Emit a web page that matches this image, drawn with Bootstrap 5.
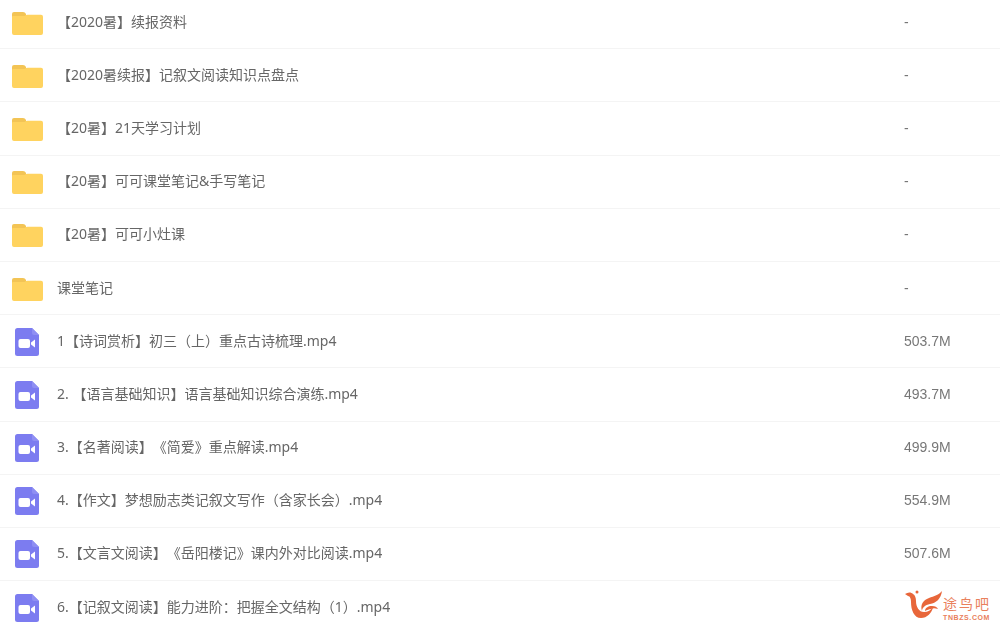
<!DOCTYPE html>
<html lang="zh-CN">

<head>
    <meta charset="UTF-8" />
    <meta name="viewport" content="width=device-width, initial-scale=1" />
    <title>文件列表</title>
    <link href="https://cdn.jsdelivr.net/npm/bootstrap@5.3.3/dist/css/bootstrap.min.css" rel="stylesheet" />
    <style>
        html, body {
            height: 100%;
            overflow: hidden;
        }

        body {
            background: #fff;
            font-family: "Noto Sans", "Noto Sans CJK SC", sans-serif;
            font-size: 14px;
            color: #666;
            text-spacing-trim: space-all;
        }

        .file-list {
            margin-top: -4px;
        }

        .file-row {
            height: 53.2px;
            padding: 0 0 0 12px;
            border-color: #f4f4f4;
            color: #666;
            background: transparent;
        }

        .file-icon {
            width: 31px;
            flex: none;
            margin-right: 14px;
        }

        .file-name {
            flex: 1;
            padding-bottom: 2px;
            filter: blur(.3px);
        }

        .file-size {
            width: 96px;
            flex: none;
            color: #777;
            font-family: "Liberation Sans", sans-serif;
            filter: blur(.3px);
        }

        .mark-wrap {
            position: absolute;
            left: 904px;
            top: 589px;
            width: 90px;
            height: 33px;
            color: #e9805c;
        }

        .mark-cn {
            position: absolute;
            left: 39px;
            top: 8px;
            font-size: 14px;
            line-height: 14px;
            letter-spacing: 2px;
            white-space: nowrap;
        }

        .mark-en {
            position: absolute;
            left: 39px;
            top: 26px;
            font-family: "Liberation Sans", sans-serif;
            font-size: 7px;
            line-height: 6px;
            font-weight: 700;
            letter-spacing: .6px;
            white-space: nowrap;
        }
    </style>
</head>

<body>
    <div class="list-group list-group-flush file-list" id="files"></div>

    <!-- 水印 -->
    <div class="mark-wrap">
        <svg width="40" height="31" viewBox="0 0 40 31">
            <path fill="#e8663a" d="M1 5c3-2 6-2 8 0 2 1 3 4 3 7 0 6 3 11 8 11 4 0 7-2 9-5-1 6-6 11-12 11C10 29 7 21 7 13c0-3-1-6-3-6z" />
            <path fill="#e8663a" d="M38 2c-1 8-6 12-12 13-5 1-8 4-8 7-2-6 1-11 7-13 5-2 10-3 13-7z" />
            <path fill="#e8663a" d="M21 22c0-3 3-5 7-5 3 0 5 1 6 3-3-1-5-1-7 0-2 0-4 1-6 2z" />
            <circle cx="13" cy="3" r="1.500" fill="#e8663a" />
        </svg>
        <span class="mark-cn">途鸟吧</span>
        <span class="mark-en">TNBZS.COM</span>
    </div>

    <script src="https://cdn.jsdelivr.net/npm/bootstrap@5.3.3/dist/js/bootstrap.bundle.min.js"></script>
    <script>
        const folderIcon = `<svg width="31" height="25" viewBox="0 -1 31 25">
            <path fill="#f3c455" d="M0 3q0-2 2-2h9q2 0 3 2v3H0z"/>
            <path fill="#ffd35f" d="M0 6q0-1 1-1h11q1 0 2-1 .6-.3 1.500-.3H29q2 0 2 2V22q0 2-2 2H2q-2 0-2-2z"/>
        </svg>`;
        const videoIcon = `<svg width="31" height="29" viewBox="0 -1 31 29">
            <path fill="#7c7cf0" d="M5.500 0H20l7 7v18.500q0 2.500-2.500 2.500h-19Q3 28 3 25.500v-23Q3 0 5.500 0z"/>
            <path fill="#8f8ff3" d="M20 0l7 7h-5q-2 0-2-2z"/>
            <rect x="6.500" y="11" width="11.500" height="9" rx="2" fill="#fff"/>
            <path fill="#fff" d="M19 14.500l4-3v8l-4-3z"/>
        </svg>`;

        const files = [
            ['f', '【2020暑】续报资料', '-'],
            ['f', '【2020暑续报】记叙文阅读知识点盘点', '-'],
            ['f', '【20暑】21天学习计划', '-'],
            ['f', '【20暑】可可课堂笔记&手写笔记', '-'],
            ['f', '【20暑】可可小灶课', '-'],
            ['f', '课堂笔记', '-'],
            ['v', '1【诗词赏析】初三（上）重点古诗梳理.mp4', '503.7M'],
            ['v', '2. 【语言基础知识】语言基础知识综合演练.mp4', '493.7M'],
            ['v', '3.【名著阅读】《简爱》重点解读.mp4', '499.9M'],
            ['v', '4.【作文】梦想励志类记叙文写作（含家长会）.mp4', '554.9M'],
            ['v', '5.【文言文阅读】《岳阳楼记》课内外对比阅读.mp4', '507.6M'],
            ['v', '6.【记叙文阅读】能力进阶：把握全文结构（1）.mp4', ''],
        ];

        const list = document.getElementById('files');
        files.forEach(([type, name, size]) => {
            const row = document.createElement('div');
            row.className = 'list-group-item d-flex align-items-center file-row';
            row.innerHTML = `<span class="file-icon d-flex">${type === 'f' ? folderIcon : videoIcon}</span>
                <span class="file-name">${name}</span>
                <span class="file-size">${size}</span>`;
            list.appendChild(row);
        });
    </script>
</body>

</html>
